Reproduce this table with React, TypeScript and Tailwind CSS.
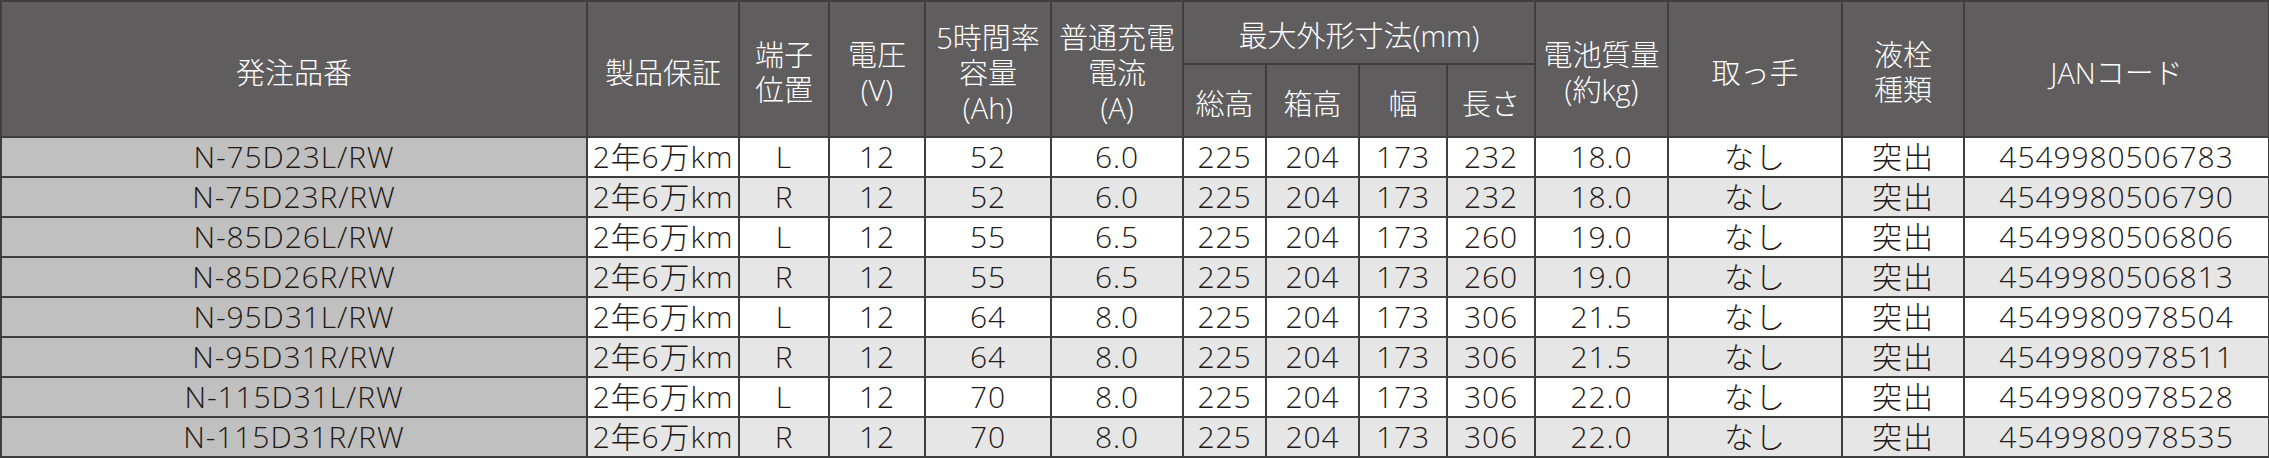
import React from "react";

const rows: string[][] = [
  ["N-75D23L/RW", "2年6万km", "L", "12", "52", "6.0", "225", "204", "173", "232", "18.0", "なし", "突出", "4549980506783"],
  ["N-75D23R/RW", "2年6万km", "R", "12", "52", "6.0", "225", "204", "173", "232", "18.0", "なし", "突出", "4549980506790"],
  ["N-85D26L/RW", "2年6万km", "L", "12", "55", "6.5", "225", "204", "173", "260", "19.0", "なし", "突出", "4549980506806"],
  ["N-85D26R/RW", "2年6万km", "R", "12", "55", "6.5", "225", "204", "173", "260", "19.0", "なし", "突出", "4549980506813"],
  ["N-95D31L/RW", "2年6万km", "L", "12", "64", "8.0", "225", "204", "173", "306", "21.5", "なし", "突出", "4549980978504"],
  ["N-95D31R/RW", "2年6万km", "R", "12", "64", "8.0", "225", "204", "173", "306", "21.5", "なし", "突出", "4549980978511"],
  ["N-115D31L/RW", "2年6万km", "L", "12", "70", "8.0", "225", "204", "173", "306", "22.0", "なし", "突出", "4549980978528"],
  ["N-115D31R/RW", "2年6万km", "R", "12", "70", "8.0", "225", "204", "173", "306", "22.0", "なし", "突出", "4549980978535"],
];

const widths = [
  "w-[586px]",
  "w-[152px]",
  "w-[90px]",
  "w-[96px]",
  "w-[126px]",
  "w-[132px]",
  "w-[83px]",
  "w-[93px]",
  "w-[88px]",
  "w-[88px]",
  "w-[133px]",
  "w-[174px]",
  "w-[122px]",
  "w-[305px]",
];

const th =
  "border-2 border-[#3e3e3e] bg-[#5f5d5e] text-white text-[29px] leading-[35px] font-light text-center align-middle p-0 pt-[6px] whitespace-nowrap";
const td =
  "border-2 border-[#3e3e3e] text-[30px] leading-[36px] font-light text-center align-middle p-0 tracking-[0.03em] whitespace-nowrap";

function Lines({ lines }: { lines: string[] }) {
  return (
    <>
      {lines.map((l, i) => (
        <div key={i}>{l}</div>
      ))}
    </>
  );
}

export default function App() {
  return (
    <div className="w-[2269px] h-[459px] bg-white overflow-hidden font-['Open_Sans','Noto_Sans_CJK_JP',sans-serif] text-[#231815]">
      <table className="table-fixed border-collapse w-[2269px]">
        <colgroup>
          {widths.map((w, i) => (
            <col key={i} className={w} />
          ))}
        </colgroup>
        <thead>
          <tr className="h-[63px]">
            <th rowSpan={2} className={th}>発注品番</th>
            <th rowSpan={2} className={th}>製品保証</th>
            <th rowSpan={2} className={th}><Lines lines={["端子", "位置"]} /></th>
            <th rowSpan={2} className={th}><Lines lines={["電圧", "(V)"]} /></th>
            <th rowSpan={2} className={th}><Lines lines={["5時間率", "容量", "(Ah)"]} /></th>
            <th rowSpan={2} className={th}><Lines lines={["普通充電", "電流", "(A)"]} /></th>
            <th colSpan={4} className={th}>最大外形寸法(mm)</th>
            <th rowSpan={2} className={th}><Lines lines={["電池質量", "(約kg)"]} /></th>
            <th rowSpan={2} className={th}>取っ手</th>
            <th rowSpan={2} className={th}><Lines lines={["液栓", "種類"]} /></th>
            <th rowSpan={2} className={th}>JANコード</th>
          </tr>
          <tr className="h-[73px]">
            <th className={th}>総高</th>
            <th className={th}>箱高</th>
            <th className={th}>幅</th>
            <th className={th}>長さ</th>
          </tr>
        </thead>
        <tbody>
          {rows.map((r, ri) => (
            <tr key={ri} className={ri % 2 === 0 ? "h-[40px] bg-white" : "h-[40px] bg-[#e6e6e6]"}>
              {r.map((c, ci) => (
                <td key={ci} className={ci === 0 ? `${td} bg-[#c0c0c0]` : td}>
                  {c}
                </td>
              ))}
            </tr>
          ))}
        </tbody>
      </table>
    </div>
  );
}
